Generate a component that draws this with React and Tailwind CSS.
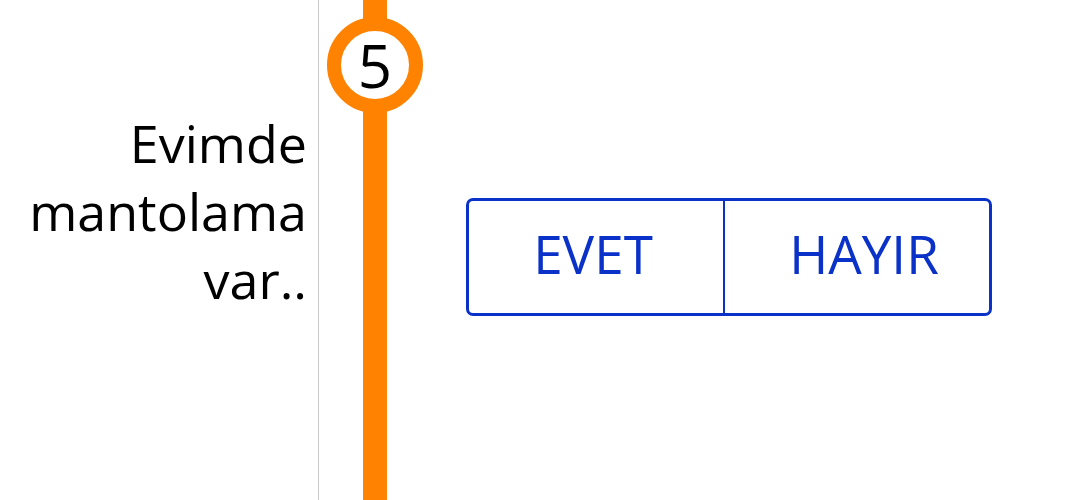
import React from 'react';

const App = () => {
  return (
    <div className="flex h-[500px] w-[1080px] overflow-hidden bg-white font-['Open_Sans',sans-serif]">
      {/* Question */}
      <div className="w-[319px] shrink-0 border-r border-[#c8c8c8] pr-[11px] pt-[109px] text-right">
        <p className="text-[52px] leading-[68px] text-black">
          Evimde
          <br />
          mantolama
          <br />
          var..
        </p>
      </div>

      {/* Step timeline */}
      <div className="relative w-[112px] shrink-0">
        <div className="ml-[44px] h-full w-6 bg-[#ff8200]" />
        <div className="absolute left-[8px] top-[17px] flex h-[96px] w-[96px] items-center justify-center rounded-full border-[14px] border-[#ff8200] bg-white">
          <span className="text-[60px] leading-none text-black">5</span>
        </div>
      </div>

      {/* Answers */}
      <div className="ml-[35px] mt-[198px]">
        <div className="flex h-[118px] w-[526px] overflow-hidden rounded-[7px] border-[3px] border-[#0a32c8]">
          <button className="flex w-[256px] items-center justify-center border-r-2 border-[#0a32c8] pr-[6px] pb-[6px] text-[53px] text-[#0a32c8]">
            EVET
          </button>
          <button className="flex flex-1 items-center justify-center pl-[14px] pb-[6px] text-[53px] text-[#0a32c8]">
            HAYIR
          </button>
        </div>
      </div>
    </div>
  );
};

export default App;
